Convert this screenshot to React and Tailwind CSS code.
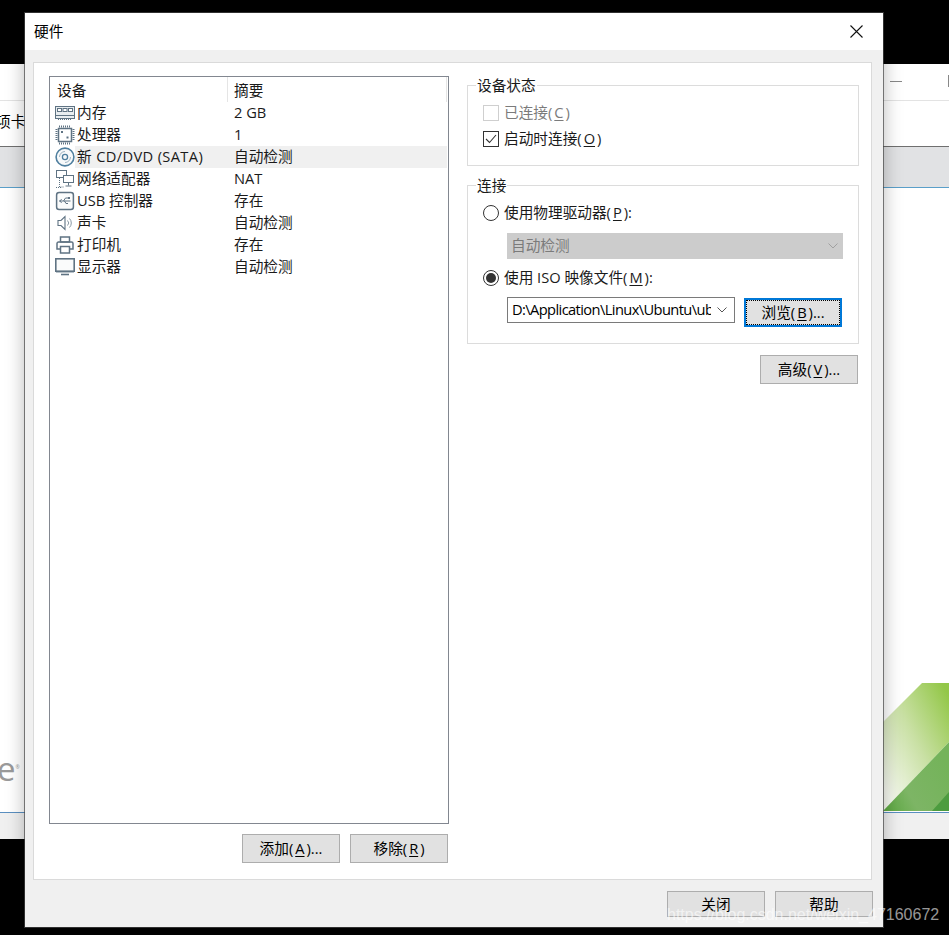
import React from "react";

const FONT = "font-['Open_Sans','Noto_Sans_CJK_SC',sans-serif]";

// ---- device icons, drawn small like the VMware ones ----
const stroke = "#5f7383";

const MemoryIcon = () => (
  <svg width="20" height="14" viewBox="0 0 20 14" fill="none" stroke={stroke}>
    <rect x="0.5" y="0.5" width="19" height="12" fill="#e8edf0" />
    <rect x="2.5" y="2.5" width="4" height="3" fill="#fff" />
    <rect x="8" y="2.5" width="4" height="3" fill="#fff" />
    <rect x="13.5" y="2.5" width="4" height="3" fill="#fff" />
    <path d="M1 9.5h18" />
    <path d="M3 13.5h14" strokeDasharray="1 1" />
  </svg>
);

const CpuIcon = () => (
  <svg width="20" height="20" viewBox="0 0 20 20" fill="none" stroke={stroke}>
    <rect x="3.5" y="3.5" width="13" height="13" fill="#fff" strokeWidth="1.5" />
    <path d="M4 1.5h12M4 18.5h12M1.5 4v12M18.5 4v12" strokeDasharray="1 1" strokeWidth="2" />
    <rect x="6" y="6" width="2" height="2" fill={stroke} stroke="none" />
    <rect x="11.5" y="11.5" width="2" height="2" fill={stroke} stroke="none" />
  </svg>
);

const DiscIcon = () => (
  <svg width="20" height="20" viewBox="0 0 20 20" fill="none" stroke="#4f7f9f">
    <circle cx="10" cy="10" r="8.9" strokeWidth="1.6" fill="#f7f9fa" />
    <circle cx="10" cy="10" r="2.6" strokeWidth="1.3" />
    <path d="M4.5 10a5.5 5.5 0 0 1 5.5-5.5" stroke="#9fb4c3" />
    <path d="M15.5 10a5.5 5.5 0 0 1-5.5 5.5" stroke="#9fb4c3" />
  </svg>
);

const NetworkIcon = () => (
  <svg width="20" height="20" viewBox="0 0 20 20" fill="none" stroke={stroke}>
    <rect x="1.5" y="1.5" width="10" height="7" fill="#fff" />
    <rect x="8.5" y="6.5" width="10" height="7" fill="#fff" />
    <path d="M13.5 14v2.5M10.5 17h6" />
    <path d="M4.5 9v9h4M1 18.5h5" strokeDasharray="1 1" />
  </svg>
);

const UsbIcon = () => (
  <svg width="20" height="20" viewBox="0 0 20 20" fill="none" stroke={stroke}>
    <rect x="1.6" y="1.6" width="16.8" height="16.8" rx="2.5" strokeWidth="1.5" fill="#fbfcfc" />
    <path d="M4.5 10h11M4.5 10l2.2-1.6M4.5 10l2.2 1.6M8.5 10l2-3h3M9.5 10l1.5 2.5h2" />
    <rect x="13" y="6" width="2" height="2" fill={stroke} stroke="none" />
  </svg>
);

const SoundIcon = () => (
  <svg width="16" height="16" viewBox="0 0 16 16" fill="none" stroke={stroke}>
    <path d="M1 5.5h3L8 1.5v13l-4-4H1z" fill="#fff" strokeWidth="1.1" />
    <path d="M10.5 5.5a3.5 3.5 0 0 1 0 5M12.5 3.5a6.5 6.5 0 0 1 0 9" stroke="#8a9aa6" />
  </svg>
);

const PrinterIcon = () => (
  <svg width="18" height="18" viewBox="0 0 18 18" fill="none" stroke={stroke} strokeWidth="1.5">
    <rect x="4.5" y="1" width="9" height="5" />
    <path d="M4 13H1V7.5a1.5 1.5 0 0 1 1.5-1.5h13A1.5 1.5 0 0 1 17 7.5V13h-3" />
    <rect x="4.5" y="10.5" width="9" height="6.5" fill="#fff" />
  </svg>
);

const MonitorIcon = () => (
  <svg width="20" height="18" viewBox="0 0 20 18" fill="none" stroke={stroke}>
    <rect x="0.8" y="0.8" width="18.4" height="12.4" strokeWidth="1.6" fill="#fafbfb" />
    <path d="M1 14.5h18" stroke="#b9c3ca" />
    <path d="M6 16.5h8" strokeWidth="1.6" />
  </svg>
);

const devices = [
  { icon: <MemoryIcon />, name: "内存", summary: "2 GB" },
  { icon: <CpuIcon />, name: "处理器", summary: "1" },
  { icon: <DiscIcon />, name: "新 CD/DVD (SATA)", summary: "自动检测", selected: true },
  { icon: <NetworkIcon />, name: "网络适配器", summary: "NAT" },
  { icon: <UsbIcon />, name: "USB 控制器", summary: "存在" },
  { icon: <SoundIcon />, name: "声卡", summary: "自动检测" },
  { icon: <PrinterIcon />, name: "打印机", summary: "存在" },
  { icon: <MonitorIcon />, name: "显示器", summary: "自动检测" },
];

const Hotkey = ({ k }) => (
  <>
    (<span className="mx-[2px] underline underline-offset-2">{k}</span>)
  </>
);

function Button({ children, className = "h-[29px] pb-[2px]" }) {
  return (
    <div
      className={`flex w-[98px] items-center justify-center border border-[#adadad] bg-[#e1e1e1] text-black ${className}`}
    >
      {children}
    </div>
  );
}

function GroupBox({ title, className = "", children }) {
  return (
    <div className={`relative border border-[#dcdcdc] ${className}`}>
      <span className="absolute left-[8px] top-[-12px] bg-white px-[1px] leading-[22px]">{title}</span>
      {children}
    </div>
  );
}

const Radio = ({ checked }) => (
  <span className="flex h-[16px] w-[16px] shrink-0 items-center justify-center rounded-full border border-[#333] bg-white">
    {checked && <span className="h-[10px] w-[10px] rounded-full bg-[#333]" />}
  </span>
);

function BackgroundWindow() {
  return (
    <div className="mt-[64px] flex h-[775px] flex-col bg-white">
      <div className="flex h-[37px] items-center justify-end border-b border-[#e3e3e3]">
        <span className="mt-[-2px] h-px w-[12px] bg-[#888]" />
        <span className="ml-[46px] mt-[-2px] h-[12px] w-px bg-[#888]" />
      </div>
      <div className="flex h-[46px] items-center border-b border-[#6f6f6f] text-[14.67px] text-black">
        <span className="ml-[-4px] pb-[5px]">项卡</span>
      </div>
      <div className="h-[41px] border-b border-[#5a9fc9] bg-[#e1e2e4]" />
      <div className="relative flex-1 overflow-hidden">
        <span className="absolute left-[-3px] top-[564px] font-['Open_Sans',sans-serif] text-[33px] leading-none text-[#9a9a9a]">
          e<span className="align-super text-[5px]">®</span>
        </span>
        <svg className="absolute left-[883px] top-[495px]" width="66" height="129" viewBox="0 0 66 129">
          <defs>
            <linearGradient id="lightGreen" x1="0.1" y1="0.9" x2="0.95" y2="0.05">
              <stop offset="0" stopColor="#f6f9f0" />
              <stop offset="0.5" stopColor="#c9e0a4" />
              <stop offset="1" stopColor="#93c748" />
            </linearGradient>
            <linearGradient id="midGreen" x1="0" y1="1" x2="1" y2="0.4">
              <stop offset="0" stopColor="#5aa83f" />
              <stop offset="0.4" stopColor="#7db565" />
              <stop offset="1" stopColor="#74b35a" />
            </linearGradient>
          </defs>
          <polygon points="39,0 66,0 66,59 0,128 0,39" fill="url(#lightGreen)" />
          <polygon points="66,59 66,128 0,128" fill="url(#midGreen)" />
          <polygon points="66,109 66,128 49,128" fill="#4c9c3f" />
        </svg>
      </div>
      <div className="h-[27px] border-t border-[#5a8fc0] bg-[#f0f0f0]" />
    </div>
  );
}

export default function App() {
  return (
    <div className={`relative h-[935px] w-[949px] overflow-hidden bg-black text-[14.67px] text-[#1a1a1a] ${FONT}`}>
      <BackgroundWindow />

      {/* dialog */}
      <div className="absolute left-[25px] top-[13px] flex h-[914px] w-[858px] flex-col bg-[#f0f0f0] shadow-[0_0_0_1px_rgba(70,70,70,0.7),0_0_18px_rgba(0,0,0,0.3)]">
        <div className="flex h-[37px] shrink-0 items-center justify-between bg-white pl-[9px] pr-[20px]">
          <span className="pb-[2px] text-black">硬件</span>
          <svg width="13" height="13" viewBox="0 0 13 13" stroke="#111" strokeWidth="1.1">
            <path d="M0.5 0.5l12 12M12.5 0.5l-12 12" />
          </svg>
        </div>

        {/* tab page */}
        <div className="ml-[8px] mt-[12px] flex h-[818px] w-[839px] shrink-0 border border-[#dadada] bg-white pl-[15px] pt-[13px]">
          <div className="flex w-[400px] shrink-0 flex-col">
            {/* device list */}
            <div className="h-[748px] border border-[#828790] bg-white">
              <div className="flex h-[25px] text-[#1a1a1a]">
                <div className="flex w-[178px] items-center border-r border-[#e5e5e5] pl-[7px]">设备</div>
                <div className="flex flex-1 items-center border-r border-[#e5e5e5] pl-[6px]">摘要</div>
                <div className="w-[1px]" />
              </div>
              <div>
                {devices.map((d) => (
                  <div key={d.name} className="flex h-[22px] items-center">
                    <div className="ml-[5px] flex w-[20px] shrink-0 items-center justify-center">{d.icon}</div>
                    <div className={`flex h-full flex-1 items-center pb-[2px] ${d.selected ? "bg-[#f0f0f0] mr-px" : ""}`}>
                      <span className={`w-[159px] shrink-0 whitespace-nowrap pl-[2px] ${d.selected ? "tracking-[0.35px]" : ""}`}>{d.name}</span>
                      <span className="whitespace-nowrap">{d.summary}</span>
                    </div>
                  </div>
                ))}
              </div>
            </div>
            <div className="mt-[10px] flex justify-end gap-[10px] pr-px">
              <Button>添加<Hotkey k="A" />...</Button>
              <Button>移除<Hotkey k="R" /></Button>
            </div>
          </div>

          {/* right column */}
          <div className="ml-[18px] flex w-[392px] shrink-0 flex-col pt-[9px]">
            <GroupBox title="设备状态" className="h-[81px] pl-[15px] pt-[15px]">
              <div className="flex h-[24px] items-center text-[#7b7b7b]">
                <span className="h-[16px] w-[16px] shrink-0 border border-[#cfcfcf] bg-white" />
                <span className="ml-[5px] pb-[2px]">已连接<Hotkey k="C" /></span>
              </div>
              <div className="mt-[2px] flex h-[24px] items-center">
                <span className="flex h-[16px] w-[16px] shrink-0 items-center justify-center border border-[#333] bg-white">
                  <svg width="12" height="10" viewBox="0 0 12 10" fill="none" stroke="#333" strokeWidth="1.1">
                    <path d="M1 5l3.5 3.5L11 1" />
                  </svg>
                </span>
                <span className="ml-[5px] pb-[2px]">启动时连接<Hotkey k="O" /></span>
              </div>
            </GroupBox>

            <GroupBox title="连接" className="mt-[19px] h-[159px] pl-[15px] pt-[15px]">
              <div className="flex h-[24px] items-center">
                <Radio />
                <span className="ml-[5px] pb-[2px]">使用物理驱动器<Hotkey k="P" />:</span>
              </div>
              <div className="ml-[24px] mt-[8px] flex h-[26px] w-[336px] items-center justify-between bg-[#cccccc] pb-[2px] pl-[4px] pr-[5px] text-[#7b7b7b]">
                <span>自动检测</span>
                <svg className="mt-[2px]" width="10" height="6" viewBox="0 0 10 6" fill="none" stroke="#a0a0a0">
                  <path d="M0.5 0.5L5 5l4.5-4.5" />
                </svg>
              </div>
              <div className="mt-[7px] flex h-[24px] items-center">
                <Radio checked />
                <span className="ml-[5px] whitespace-pre pb-[2px]">使用 ISO 映像文件<Hotkey k="M" />:</span>
              </div>
              <div className="ml-[24px] mt-[7px] flex items-start">
                <div className="flex h-[26px] w-[228px] items-center border border-[#7a7a7a] bg-white pl-[4px] pr-[5px] text-black">
                  <span className="w-[199px] overflow-hidden whitespace-nowrap pb-[2px] tracking-[-0.6px]">D:\Application\Linux\Ubuntu\ub</span>
                  <svg className="ml-[6px] shrink-0" width="10" height="6" viewBox="0 0 10 6" fill="none" stroke="#555">
                    <path d="M0.5 0.5L5 5l4.5-4.5" />
                  </svg>
                </div>
                <div className="ml-[9px] mt-px flex h-[29px] w-[98px] items-center justify-center border-2 border-[#0078d7] bg-[#e1e1e1] pb-[2px] text-black outline-1 -outline-offset-3 outline-dotted outline-black">
                  浏览<Hotkey k="B" />...
                </div>
              </div>
            </GroupBox>

            <div className="mt-[11px] flex justify-end pr-px">
              <Button>高级<Hotkey k="V" />...</Button>
            </div>
          </div>
        </div>

        {/* footer */}
        <div className="mt-[11px] flex justify-end gap-[10px] pr-[10px]">
          <Button className="h-[26px]">关闭</Button>
          <Button className="h-[26px]">帮助</Button>
        </div>
      </div>

      {/* csdn watermark */}
      <span className="absolute left-[667px] top-[906px] whitespace-nowrap font-['Liberation_Sans',sans-serif] text-[16px] leading-[18px] text-white/60">
        https://blog.csdn.net/weixin_47160672
      </span>
    </div>
  );
}
